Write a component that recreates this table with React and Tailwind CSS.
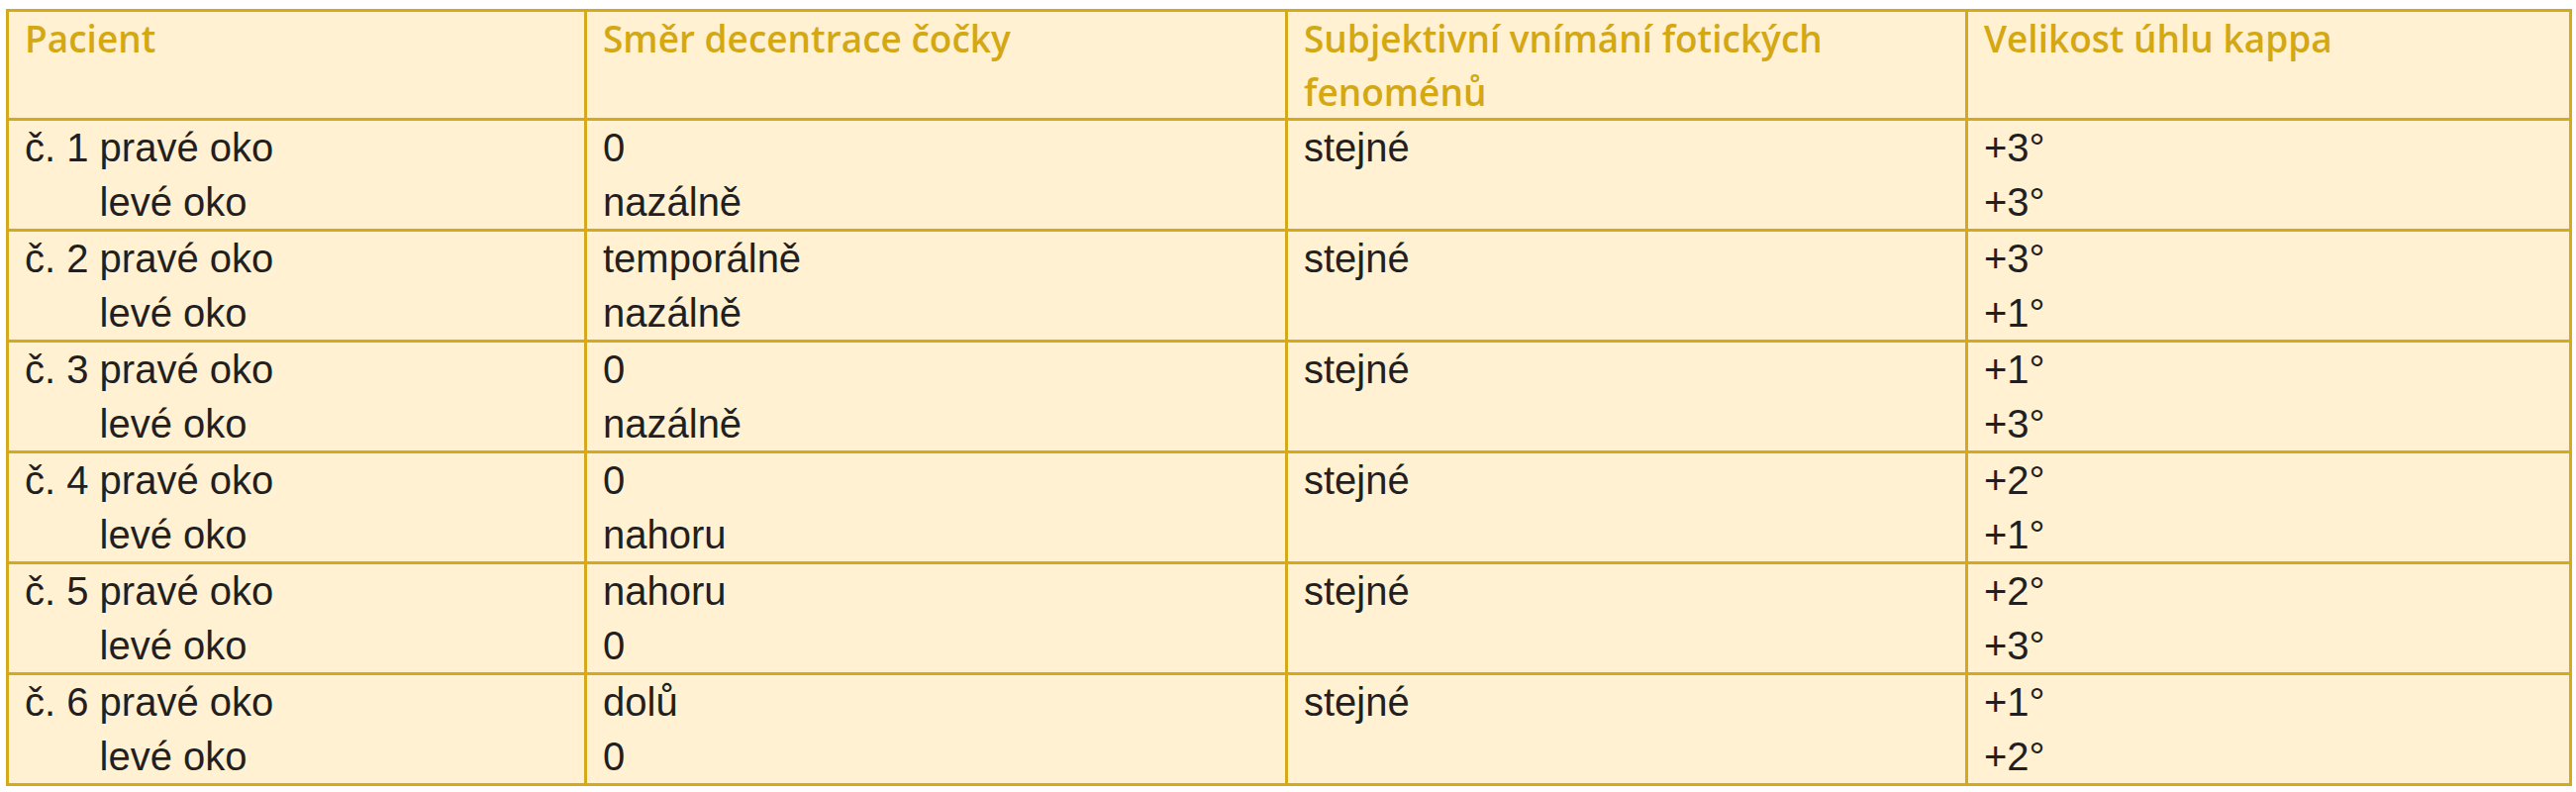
const HEAD = ['Pacient', 'Směr decentrace čočky', 'Subjektivní vnímání fotických fenoménů', 'Velikost úhlu kappa'];

const ROWS = [
  { n: '1', right: '0', left: 'nazálně', kr: '+3°', kl: '+3°' },
  { n: '2', right: 'temporálně', left: 'nazálně', kr: '+3°', kl: '+1°' },
  { n: '3', right: '0', left: 'nazálně', kr: '+1°', kl: '+3°' },
  { n: '4', right: '0', left: 'nahoru', kr: '+2°', kl: '+1°' },
  { n: '5', right: 'nahoru', left: '0', kr: '+2°', kl: '+3°' },
  { n: '6', right: 'dolů', left: '0', kr: '+1°', kl: '+2°' },
];

const cell = 'border-[3px] border-[#d4aa1c] align-top pl-[16px] pr-4 py-0';

export default function App() {
  return (
    <div className="min-h-screen bg-white pt-[9px] pl-[6px]">
      <table className="table-fixed border-collapse bg-[#fff1d2] w-[2589px]">
        <colgroup>
          <col className="w-[584px]" />
          <col className="w-[708px]" />
          <col className="w-[687px]" />
          <col className="w-[610px]" />
        </colgroup>
        <thead>
          <tr>
            {HEAD.map((h) => (
              <th
                key={h}
                className={`${cell} text-left font-semibold text-[37px] leading-[53.5px] text-[#d4a812] [font-family:'Open_Sans',sans-serif] [font-stretch:88%]`}
              >
                <div className="h-[107px] max-w-[560px]">{h}</div>
              </th>
            ))}
          </tr>
        </thead>
        <tbody className="text-[40px] leading-[54.5px] text-[#231f20] [font-family:'Liberation_Sans',sans-serif]">
          {ROWS.map((r) => (
            <tr key={r.n}>
              <td className={cell}>
                <div>č. {r.n} pravé oko</div>
                <div>
                  <span className="invisible">č. {r.n} </span>levé oko
                </div>
              </td>
              <td className={cell}>
                <div>{r.right}</div>
                <div>{r.left}</div>
              </td>
              <td className={cell}>
                <div>stejné</div>
              </td>
              <td className={cell}>
                <div>{r.kr}</div>
                <div>{r.kl}</div>
              </td>
            </tr>
          ))}
        </tbody>
      </table>
    </div>
  );
}
